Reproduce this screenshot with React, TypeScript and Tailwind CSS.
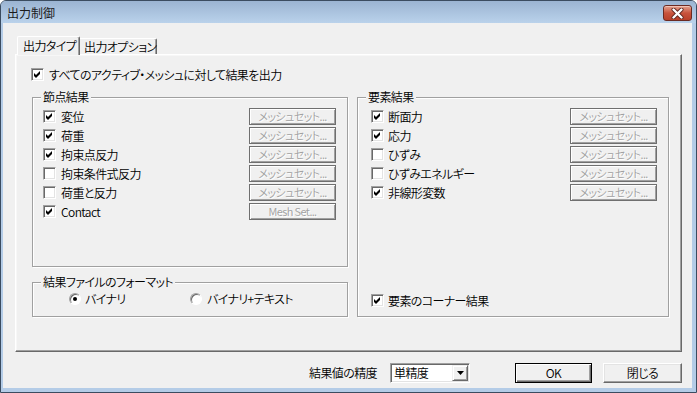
import React from "react";

function Check({ checked }: { checked?: boolean }) {
  return (
    <span className="w-[13px] h-[13px] shrink-0 bg-white border border-t-[#a0a0a0] border-l-[#a0a0a0] border-b-white border-r-white shadow-[inset_1px_1px_0_#696969,inset_-1px_-1px_0_#e3e3e3] flex items-center justify-center">
      {checked && (
        <svg width="7" height="7" viewBox="0 0 7 7">
          <path d="M0 2 L2 4 L6 0 L6 3 L2 7 L0 5 Z" fill="#000" />
        </svg>
      )}
    </span>
  );
}

function Radio({ checked }: { checked?: boolean }) {
  return (
    <span className="w-[12px] h-[12px] shrink-0 rounded-full bg-white border border-t-[#a0a0a0] border-l-[#a0a0a0] border-b-white border-r-white shadow-[inset_1px_1px_0_#696969] flex items-center justify-center">
      {checked && <span className="w-[4px] h-[4px] rounded-full bg-black" />}
    </span>
  );
}

function MeshButton({ label = "メッシュセット..." }: { label?: string }) {
  return (
    <div className="w-[87px] h-[17px] shrink-0 border border-[#6f6f6f] shadow-[inset_1px_1px_0_#fff,inset_-1px_-1px_0_#a0a0a0] flex items-center justify-center whitespace-nowrap text-[11px] leading-none text-[#a0a0a0] [text-shadow:1px_1px_0_#fff]">
      {label}
    </div>
  );
}

function Group({
  title,
  className,
  children,
}: {
  title: string;
  className: string;
  children?: React.ReactNode;
}) {
  return (
    <div
      className={`relative border border-[#a0a0a0] shadow-[inset_1px_1px_0_#fff,1px_1px_0_#fff] ${className}`}
    >
      <span className="absolute -top-[8px] left-[8px] px-[2px] bg-[#f0f0f0] whitespace-nowrap text-[12px] leading-[14px]">
        {title}
      </span>
      {children}
    </div>
  );
}

function Row({
  label,
  checked,
  button,
  gap,
}: {
  label: string;
  checked?: boolean;
  button?: string;
  gap: string;
}) {
  return (
    <div className="h-[19px] flex items-center">
      <Check checked={checked} />
      <span className={`${gap} flex-1 whitespace-nowrap text-[12px] leading-[14px]`}>{label}</span>
      <MeshButton label={button} />
    </div>
  );
}

const nodeRows = [
  { label: "変位", checked: true },
  { label: "荷重", checked: true },
  { label: "拘束点反力", checked: true },
  { label: "拘束条件式反力", checked: false },
  { label: "荷重と反力", checked: false },
  { label: "Contact", checked: true, button: "Mesh Set..." },
];

const elemRows = [
  { label: "断面力", checked: true },
  { label: "応力", checked: true },
  { label: "ひずみ", checked: false },
  { label: "ひずみエネルギー", checked: false },
  { label: "非線形変数", checked: true },
];

export default function App() {
  return (
    <div className="w-[697px] h-[393px] bg-[#b4cce7] border border-[#3b4c60] rounded-t-[6px] flex flex-col overflow-hidden font-['Noto_Sans_CJK_JP',sans-serif] font-[350] [font-feature-settings:'palt'] tracking-[-0.6px] text-black">
      {/* title bar */}
      <div className="h-[22px] shrink-0 bg-gradient-to-b from-[#9bb4d2] to-[#bad2eb] flex items-start pl-[6px]">
        <span className="mt-[4px] text-[12px] leading-[16px] font-normal tracking-normal text-[#1b1b1b] flex-1">出力制御</span>
        <div className="mt-[4px] mr-[4px] w-[29px] h-[16px] rounded-[3px] border border-[#6b2a22] bg-gradient-to-b from-[#e2a18f] via-[#c8533c] to-[#b8402a] shadow-[inset_0_1px_0_#f1c2b4] flex items-center justify-center">
          <svg width="13" height="11" viewBox="0 0 13 11">
            <path d="M2.5 1.5 L10.5 9.5 M10.5 1.5 L2.5 9.5" stroke="#5a231b" strokeWidth="4" strokeLinecap="round" />
            <path d="M2.5 1.5 L10.5 9.5 M10.5 1.5 L2.5 9.5" stroke="#fff" strokeWidth="2.4" strokeLinecap="round" />
          </svg>
        </div>
      </div>

      {/* client */}
      <div className="flex-1 ml-[2px] mr-[4px] mb-[4px] bg-[#f0f0f0] flex flex-col pt-[13px] pl-[12px]">
        {/* tabs */}
        <div className="flex items-end ml-[2px]">
          <div className="relative z-10 -mb-[1px] w-[63px] h-[19px] bg-[#f0f0f0] border-t border-l border-r border-t-white border-l-white border-r-[#696969] shadow-[inset_-1px_0_0_#a0a0a0] rounded-t-[2px] flex items-start pt-[2px] pl-[5px] whitespace-nowrap text-[12px] leading-[14px]">
            出力タイプ
          </div>
          <div className="w-[77px] h-[16px] border-t border-r border-t-white border-r-[#696969] shadow-[inset_-1px_0_0_#a0a0a0] rounded-tr-[2px] flex items-start pt-[1px] pl-[4px] whitespace-nowrap text-[12px] leading-[14px]">
            出力オプション
          </div>
        </div>

        {/* panel */}
        <div className="w-[667px] h-[298px] border border-t-white border-l-white border-b-[#696969] border-r-[#696969] shadow-[inset_-1px_-1px_0_#a0a0a0,inset_1px_1px_0_#f7f7f7] flex flex-col">
          <div className="mt-[13px] ml-[15px] h-[13px] flex items-center">
            <Check checked />
            <span className="ml-[5px] whitespace-nowrap text-[12px] leading-[14px]">
              すべてのアクティブ・メッシュに対して結果を出力
            </span>
          </div>

          <div className="mt-[16px] ml-[16px] flex items-start gap-[9px]">
            <div className="flex flex-col">
              <Group title="節点結果" className="w-[316px] h-[170px] pt-[9px] pl-[10px] pr-[11px]">
                {nodeRows.map((r) => (
                  <Row key={r.label} label={r.label} checked={r.checked} button={r.button} gap="ml-[5px]" />
                ))}
              </Group>
              <Group title="結果ファイルのフォーマット" className="mt-[15px] w-[316px] h-[35px] pt-[6px] pl-[36px]">
                <div className="h-[19px] flex items-center whitespace-nowrap text-[12px] leading-[14px]">
                  <div className="w-[121px] flex items-center">
                    <Radio checked />
                    <span className="ml-[4px]">バイナリ</span>
                  </div>
                  <div className="flex items-center">
                    <Radio />
                    <span className="ml-[5px]">バイナリ+テキスト</span>
                  </div>
                </div>
              </Group>
            </div>

            <Group title="要素結果" className="w-[312px] h-[220px] pt-[9px] pl-[13px] pr-[11px] flex flex-col">
              {elemRows.map((r) => (
                <Row key={r.label} label={r.label} checked={r.checked} gap="ml-[4px]" />
              ))}
              <div className="mt-auto mb-[6px] h-[19px] flex items-center">
                <Check checked />
                <span className="ml-[4px] whitespace-nowrap text-[12px] leading-[14px]">要素のコーナー結果</span>
              </div>
            </Group>
          </div>
        </div>

        {/* bottom row */}
        <div className="mt-[11px] pr-[10px] h-[20px] flex items-center justify-end whitespace-nowrap text-[12px] leading-[14px]">
          <span className="mr-[13px]">結果値の精度</span>
          <div className="w-[80px] h-[20px] mr-[45px] bg-white border border-t-[#a0a0a0] border-l-[#a0a0a0] border-b-white border-r-white shadow-[inset_1px_1px_0_#696969,inset_-1px_-1px_0_#e3e3e3] flex items-stretch p-[1px]">
            <span className="flex-1 pl-[2px] flex items-center">単精度</span>
            <div className="w-[16px] bg-[#f0f0f0] border border-t-[#f0f0f0] border-l-[#f0f0f0] border-b-[#696969] border-r-[#696969] shadow-[inset_1px_1px_0_#fff,inset_-1px_-1px_0_#a0a0a0] flex items-center justify-center">
              <svg width="7" height="4" viewBox="0 0 7 4">
                <path d="M0 0 H7 L3.5 4 Z" fill="#000" />
              </svg>
            </div>
          </div>
          <div className="w-[77px] h-[20px] mr-[11px] border border-black shadow-[inset_1px_1px_0_#fff,inset_-1px_-1px_0_#696969,inset_-2px_-2px_0_#a0a0a0] flex items-center justify-center">
            OK
          </div>
          <div className="w-[79px] h-[20px] border border-t-white border-l-white border-b-[#696969] border-r-[#696969] shadow-[inset_-1px_-1px_0_#a0a0a0,inset_1px_1px_0_#e3e3e3] flex items-center justify-center">
            閉じる
          </div>
        </div>
      </div>
    </div>
  );
}
